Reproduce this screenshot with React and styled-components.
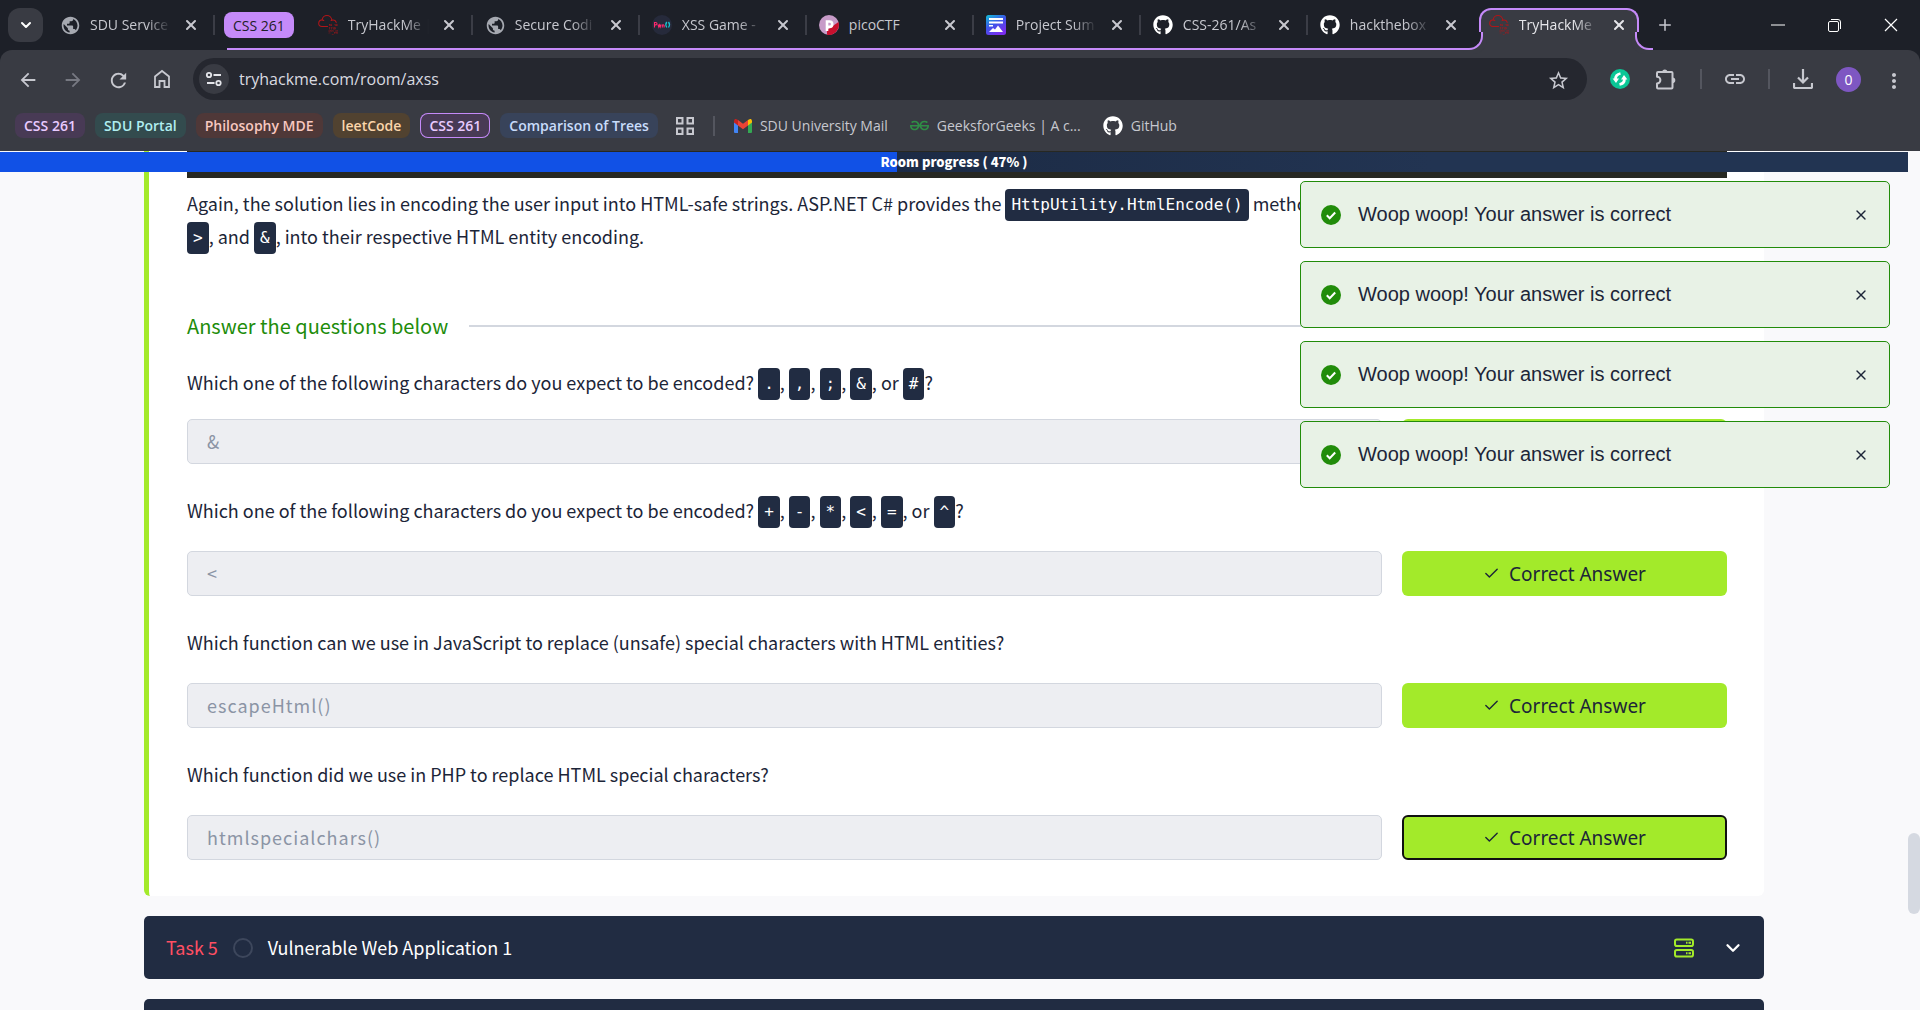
import React from "react";
import styled, { createGlobalStyle, css } from "styled-components";
import { FaGithub } from "react-icons/fa";
import { SiTryhackme, SiGeeksforgeeks } from "react-icons/si";
import { MdPublic, MdArrowBack, MdArrowForward, MdRefresh, MdStarBorder, MdLink, MdMoreVert } from "react-icons/md";
import { X, Plus, ChevronDown, Check } from "lucide-react";

const chromeFont = `"Open Sans", "Noto Sans", sans-serif`;
const pageFont = `"Noto Sans CJK SC", "Noto Sans", sans-serif`;
const strip = "#1d2028";
const bar = "#393b43";
const purple = "#c58af9";

const Global = createGlobalStyle`
  * { box-sizing: border-box; }
  body { margin: 0; background: #f9f9fb; }
  button, input { font: inherit; margin: 0; }
`;

const Window = styled.div`
  height: 100vh;
  display: flex;
  flex-direction: column;
  overflow: hidden;
  background: ${strip};
`;

/* ---------- tab strip ---------- */
const TabStrip = styled.header`
  height: 50px;
  display: flex;
  align-items: center;
  padding-left: 8px;
  color: #c7c8cf;
  font: 14px ${chromeFont};
`;
const PlainButton = styled.button`
  display: grid;
  place-items: center;
  flex: none;
  padding: 0;
  border: 0;
  background: none;
  color: inherit;
  width: ${(p) => p.$w || 20}px;
  height: ${(p) => p.$h || p.$w || 20}px;
`;
const TabSearch = styled(PlainButton)`
  margin-right: 5px;
  border-radius: 12px;
  background: ${bar};
  color: #fff;
`;
const Tab = styled.div`
  position: relative;
  flex: 0 1 167px;
  min-width: 0;
  height: 50px;
  display: flex;
  align-items: center;
  gap: 10px;
  padding: 0 14px 0 12px;
  &::after {
    content: "";
    position: absolute;
    right: 0;
    top: 15px;
    width: 2px;
    height: 20px;
    background: ${(p) => (p.$last ? "transparent" : "#3b3d46")};
  }
`;
const GroupTab = styled(Tab)`
  box-shadow: inset 0 -2px ${purple};
`;
const foot = css`
  content: "";
  position: absolute;
  bottom: 0;
  top: auto;
  width: 16px;
  height: 16px;
  background: ${strip};
  border-bottom: 2px solid ${purple};
`;
const ActiveTab = styled.div`
  position: relative;
  flex: 0 1 160px;
  min-width: 0;
  height: 42px;
  align-self: flex-end;
  margin: 0 4px;
  display: flex;
  align-items: center;
  gap: 10px;
  padding: 0 8px 10px 8px;
  color: #e6e6ea;
  background: ${bar};
  border: 2px solid ${purple};
  border-bottom: 0;
  border-radius: 12px 12px 0 0;
  &::before {
    ${foot}
    left: -16px;
    border-right: 2px solid ${purple};
    border-bottom-right-radius: 14px;
    box-shadow: 4px 4px 0 ${bar};
  }
  &::after {
    ${foot}
    right: -16px;
    border-left: 2px solid ${purple};
    border-bottom-left-radius: 14px;
    box-shadow: -4px 4px 0 ${bar};
  }
`;
const TabIcon = styled.span`
  flex: none;
  width: 20px;
  height: 20px;
  display: grid;
  place-items: center;
`;
const TabTitle = styled.span`
  flex: 1;
  min-width: 0;
  overflow: hidden;
  white-space: nowrap;
  line-height: 20px;
  mask-image: ${(p) => (p.$short ? "none" : "linear-gradient(90deg, #000 70%, transparent)")};
`;
const GroupStart = styled.div`
  flex: none;
  height: 50px;
  display: flex;
  align-items: center;
  padding: 0 12px 0 9px;
  background: linear-gradient(${purple}, ${purple}) 12px 100% / 100% 2px no-repeat;
`;
const GroupLabel = styled.button`
  height: 26px;
  padding: 0 9px;
  border: 0;
  border-radius: 8px;
  background: ${purple};
  color: ${strip};
  white-space: nowrap;
`;
const WindowControls = styled.div`
  margin-left: auto;
  display: flex;
  align-items: center;
  color: #fff;
`;

/* ---------- toolbar ---------- */
const Toolbar = styled.div`
  height: 58px;
  display: flex;
  align-items: center;
  gap: 21px;
  padding: 0 18px 0 17px;
  background: ${bar};
  border-radius: 12px 12px 0 0;
  color: #c7c8cf;
`;
const Nav = styled.nav`
  display: flex;
  gap: 25px;
`;
const AddressBar = styled.label`
  flex: 1;
  height: 42px;
  display: flex;
  align-items: center;
  gap: 10px;
  padding: 0 20px 0 6px;
  border-radius: 21px;
  background: #25272f;
  font: 16px ${chromeFont};
`;
const SiteInfo = styled(PlainButton)`
  border-radius: 50%;
  background: ${bar};
  color: #e4e5ea;
`;
const AddressText = styled.input`
  flex: 1;
  min-width: 0;
  border: 0;
  padding: 0;
  outline: 0;
  background: none;
  color: #d9dae0;
`;
const Tools = styled.div`
  display: flex;
  align-items: center;
  gap: 21px;
`;
const Divider = styled.span`
  flex: none;
  width: 2px;
  height: 20px;
  background: #54565f;
`;
const Avatar = styled(PlainButton)`
  border-radius: 50%;
  background: #7e57c2;
  color: #fff;
  font: 14px ${chromeFont};
`;

/* ---------- bookmarks ---------- */
const Bookmarks = styled.nav`
  height: 43px;
  display: flex;
  align-items: flex-start;
  gap: 10px;
  padding: 5px 15px 0;
  background: ${bar};
  color: #c7c8cf;
  font: 14px ${chromeFont};
`;
const Chip = styled.button`
  height: 25px;
  padding: 0 9px;
  border: 0;
  border-radius: 8px;
  box-shadow: ${(p) => (p.$outline ? `inset 0 0 0 1px ${purple}` : "none")};
  background: ${(p) => p.$bg};
  color: ${(p) => p.$fg};
  font-weight: 600;
  font-size: 14px;
  line-height: 20px;
  white-space: nowrap;
`;
const BookmarkTools = styled.div`
  height: 25px;
  display: flex;
  align-items: center;
  gap: 19px;
  padding: 0 9px 0 8px;
`;
const Bookmark = styled.a`
  height: 25px;
  display: flex;
  align-items: center;
  gap: 8px;
  margin-right: 12px;
  color: inherit;
  text-decoration: none;
  white-space: nowrap;
`;

/* ---------- page ---------- */
const Viewport = styled.div`
  position: relative;
  flex: 1;
  min-height: 0;
  display: flex;
  overflow: hidden;
  background: #f9f9fb;
  color: #1c2538;
  font: 18px/31px ${pageFont};
`;
const Room = styled.main`
  position: relative;
  flex: 1;
  min-width: 0;
  padding: 0 144px;
`;
const Progress = styled.div`
  position: absolute;
  left: 0;
  right: 0;
  top: 1px;
  height: 20px;
  display: grid;
  place-items: center;
  background: linear-gradient(90deg, #1151e6 47%, #1c2b45 47%, #223452 75%);
  color: #fff;
  font-size: 13px;
  line-height: 18px;
  font-weight: 900;
`;
const Scrollbar = styled.div`
  flex: none;
  width: 12px;
  padding-top: 682px;
`;
const Thumb = styled.div`
  height: 81px;
  border-radius: 6px;
  background: #d5d9e1;
`;
const Panel = styled.section`
  padding: 0 37px 36px 38px;
  border-left: 5px solid #a3ea2a;
  border-radius: 0 0 6px 6px;
  background: #fff;
`;
const CodeBlock = styled.div`
  height: 27px;
  background: #272822;
`;
const Paragraph = styled.p`
  margin: 10px 0 0;
`;
const Code = styled.code`
  display: inline-block;
  height: 32px;
  margin-top: 1px;
  padding: 0 6px;
  border-radius: 4px;
  background: #212c42;
  color: #fff;
  font: 16px/32px "DejaVu Sans Mono", "Liberation Mono", monospace;
  vertical-align: top;
`;
const SectionTitle = styled.h2`
  display: flex;
  align-items: center;
  gap: 21px;
  margin: 55px 0 25px;
  color: #218c0a;
  font-size: 20px;
  line-height: 33px;
  font-weight: 400;
  &::after {
    content: "";
    flex: 1;
    height: 2px;
    background: #d3d7df;
  }
`;
const Question = styled.div`
  display: flex;
  flex-direction: column;
  gap: ${(p) => (p.$tight ? 19 : 23)}px;
  & + & {
    margin-top: 31px;
  }
`;
const Prompt = styled.label`
  min-height: 33px;
`;
const AnswerRow = styled.div`
  display: grid;
  grid-template-columns: minmax(0, 1fr) 325px;
  gap: 20px;
`;
const Answer = styled.input`
  height: 45px;
  padding: 0 20px 2px 19px;
  border: 1px solid #d3d7df;
  border-radius: 5px;
  outline: 0;
  background: #edeef2;
  color: #8b94a5;
  letter-spacing: 1px;
`;
const CorrectButton = styled.button`
  height: 45px;
  display: flex;
  align-items: center;
  justify-content: center;
  gap: 9px;
  border: ${(p) => (p.$focused ? "2px solid #101010" : "0")};
  border-radius: 6px;
  background: #a3ea2a;
  color: #1c2538;
  font: 19px "Noto Sans", sans-serif;
`;
const TaskBar = styled.section`
  height: 63px;
  display: flex;
  align-items: center;
  margin-top: 20px;
  padding: 0 19px 0 22px;
  border-radius: 5px;
  background: #212c42;
  color: #fff;
`;
const TaskNumber = styled.span`
  color: #ff4f63;
`;
const TaskState = styled.span`
  width: 20px;
  height: 20px;
  margin: 0 15px;
  border: 2px solid #3d475c;
  border-radius: 50%;
`;
const TaskName = styled.h2`
  margin: 0;
  font-size: 18px;
  font-weight: 400;
`;
const TaskActions = styled.div`
  display: flex;
  align-items: center;
  gap: 27px;
  margin-left: auto;
`;

/* ---------- toasts ---------- */
const Toasts = styled.aside`
  position: absolute;
  right: 30px;
  top: 30px;
  width: 590px;
  display: flex;
  flex-direction: column;
  gap: 13px;
`;
const Toast = styled.div`
  height: 67px;
  display: flex;
  align-items: center;
  gap: 17px;
  padding: 0 18px 0 20px;
  border: 1px solid #218c0a;
  border-radius: 5px;
  background: #e8f2e6;
  font: 20px "Liberation Sans", Arial, sans-serif;
`;
const ToastText = styled.span`
  flex: 1;
`;

/* ---------- drawings ---------- */
const PwnIcon = () => (
  <svg width="20" height="20" viewBox="0 0 20 20">
    <circle cx="10" cy="10" r="10" fill="#262a3b" />
    <path d="M2.500 12.500V7.500h1.200q1.300 0 1.300 1.200t-1.300 1.200h-1.200M6 9.500l.8 2.500.7-2 .7 2 .7-2.500M10.300 12.500V10q1.800-.4 1.800.6v1.900" fill="none" stroke="#ff2a6d" strokeWidth="1.100" />
    <path d="M14.800 7q-2 2.500 0 5.500M16.500 7q2 2.500 0 5.500" fill="none" stroke="#19c3cf" strokeWidth="1.300" />
  </svg>
);
const PicoIcon = () => (
  <svg width="20" height="20" viewBox="0 0 20 20">
    <circle cx="10" cy="10" r="10" fill="#c79bc8" />
    <path d="M19.500 7A10 10 0 0 1 8 19.700V15z" fill="#c8102e" />
    <path d="M8 16V6.500h2.500a2.700 2.700 0 0 1 0 5.400H8" fill="none" stroke="#fff" strokeWidth="2.600" />
  </svg>
);
const ProjectIcon = () => (
  <svg width="20" height="20" viewBox="0 0 20 20">
    <defs>
      <linearGradient id="proj" x1="0" y1="0" x2=".6" y2="1">
        <stop offset="0" stopColor="#12c2d6" />
        <stop offset=".5" stopColor="#3b56e8" />
        <stop offset="1" stopColor="#7a2df0" />
      </linearGradient>
    </defs>
    <rect width="20" height="20" rx="2.500" fill="url(#proj)" />
    <path d="M3 4h14M3 7.500h14" stroke="#fff" strokeWidth="1.800" />
    <path d="M3 17l4-4 2 1.500 3-4 5 6.500zM3 10h4v1.500H3z" fill="#fff" />
  </svg>
);
const GmailIcon = () => (
  <svg width="18" height="14" viewBox="0 0 18 14">
    <path d="M0 2v11a1 1 0 0 0 1 1h3V5z" fill="#4285f4" />
    <path d="M18 2v11a1 1 0 0 1-1 1h-3V5z" fill="#34a853" />
    <path d="M4 1v5.500l5 3.800 5-3.800V1L9 4.800z" fill="#ea4335" />
    <path d="M0 2q.3-3 3-1.600L4 1v5.500L0 3.500z" fill="#c5221f" />
    <path d="M18 2q-.3-3-3-1.600L14 1v5.500l4-3z" fill="#fbbc04" />
  </svg>
);
const HomeIcon = () => (
  <svg width="20" height="20" viewBox="0 0 20 20" fill="none" stroke="currentColor" strokeWidth="1.800">
    <path d="M3 18V7.500L10 2l7 5.500V18h-4.500v-6h-5v6z" />
  </svg>
);
const TuneIcon = () => (
  <svg width="18" height="18" viewBox="0 0 18 18" fill="none" stroke="currentColor" strokeWidth="1.800">
    <circle cx="4" cy="5" r="2.200" />
    <path d="M8.500 5H16M2 13h7.500" />
    <circle cx="13.500" cy="13" r="2.200" />
  </svg>
);
const PuzzleIcon = () => (
  <svg width="22" height="22" viewBox="0 0 22 22" fill="none" stroke="currentColor" strokeWidth="2" strokeLinejoin="round">
    <path d="M3 4h13.500q1 0 1 1v14.500q0 1-1 1H3q-1 0-1-1V15.500a3.400 3.400 0 0 0 0-6.800V5q0-1 1-1z" />
    <path d="M7.200 4a2.600 2.600 0 0 1 5.200 0zM17.500 9.500a2.800 2.800 0 0 1 0 5.600z" fill="currentColor" stroke="none" />
  </svg>
);
const DownloadIcon = () => (
  <svg width="20" height="20" viewBox="0 0 20 20" fill="none" stroke="currentColor" strokeWidth="2.200">
    <path d="M10 0v13M5 8.500l5 5 5-5M1 14v4q0 1 1 1h16q1 0 1-1v-4" />
  </svg>
);
const SyncIcon = () => (
  <svg width="20" height="20" viewBox="0 0 20 20">
    <circle cx="10" cy="10" r="10" fill="#0bc796" />
    <path d="M10.500 4.500Q5.500 5.500 5.600 10M9.500 15.500Q14.500 14.500 14.400 10" fill="none" stroke="#fff" strokeWidth="2.800" />
    <path d="M2.600 9.500h6.400l-3 4.500zM17.400 10.500H11l3-4.500z" fill="#fff" />
  </svg>
);
const GridIcon = () => (
  <svg width="18" height="18" viewBox="0 0 18 18" fill="none" stroke="#c7c8cf" strokeWidth="2">
    <path d="M1 1h5.500v5.500H1zM11.500 1H17v5.500h-5.500zM1 11.500h5.500V17H1zM11.500 11.500H17V17h-5.500z" />
  </svg>
);
const RestoreIcon = () => (
  <svg width="13" height="13" viewBox="0 0 13 13" fill="none" stroke="currentColor">
    <rect x=".5" y="2.500" width="10" height="10" rx="1.500" />
    <path d="M3 .5h7a2.500 2.500 0 0 1 2.500 2.500v7" />
  </svg>
);
const ServerIcon = () => (
  <svg width="20" height="20" viewBox="0 0 20 20" fill="none" stroke="#a3ea2a" strokeWidth="2">
    <rect x="1" y="1.500" width="18" height="6.500" rx="1.800" />
    <rect x="1" y="12" width="18" height="6.500" rx="1.800" />
    <path d="M12 4.800h1.500M14.500 4.800h2.500M12 15.200h1.500M14.500 15.200h2.500" />
  </svg>
);
const SuccessIcon = () => (
  <svg width="20" height="20" viewBox="0 0 20 20">
    <circle cx="10" cy="10" r="10" fill="#218c0a" />
    <path d="M5.800 10.300l2.900 2.900 5.500-5.700" fill="none" stroke="#fff" strokeWidth="2" />
  </svg>
);

const Thm = () => <SiTryhackme size={20} color="#b01518" />;
const Globe = () => <MdPublic size={21} color="#a6a9b1" />;
const Github = () => <FaGithub size={20} color="#fff" />;

const groupTabs = [
  ["TryHackMe |", Thm],
  ["Secure Codi", Globe],
  ["XSS Game -", PwnIcon],
  ["picoCTF", PicoIcon, true],
  ["Project Sum", ProjectIcon],
  ["CSS-261/As", Github],
  ["hackthebox", Github],
];

const chips = [
  ["CSS 261", "#483a55", "#e9cbff"],
  ["SDU Portal", "#334b4e", "#b0eef0"],
  ["Philosophy MDE", "#4f3838", "#f8c8c0"],
  ["leetCode", "#514230", "#fbd6ab"],
  ["CSS 261", "#483a55", "#e9cbff", true],
  ["Comparison of Trees", "#38435a", "#c8dcfb"],
];

const questions = [
  { chars: [".", ",", ";", "&", "#"], answer: "&", tight: true },
  { chars: ["+", "-", "*", "<", "=", "^"], answer: "<" },
  { text: "Which function can we use in JavaScript to replace (unsafe) special characters with HTML entities?", answer: "escapeHtml()" },
  { text: "Which function did we use in PHP to replace HTML special characters?", answer: "htmlspecialchars()", focused: true },
];

const CloseTab = () => (
  <PlainButton aria-label="Close tab">
    <X size={16} strokeWidth={3} />
  </PlainButton>
);

const CharList = ({ chars }) => (
  <>
    Which one of the following characters do you expect to be encoded?{" "}
    {chars.map((c, i) => (
      <React.Fragment key={c}>
        {i === 0 ? "" : i === chars.length - 1 ? ", or " : ", "}
        <Code>{c}</Code>
      </React.Fragment>
    ))}
    ?
  </>
);

export default function App() {
  return (
    <Window>
      <Global />
      <TabStrip>
        <TabSearch $w={35} $h={34} aria-label="Search tabs">
          <ChevronDown size={16} strokeWidth={3} />
        </TabSearch>
        <Tab>
          <TabIcon><Globe /></TabIcon>
          <TabTitle>SDU Service</TabTitle>
          <CloseTab />
        </Tab>
        <GroupStart>
          <GroupLabel>CSS 261</GroupLabel>
        </GroupStart>
        {groupTabs.map(([title, Icon, short], i) => (
          <GroupTab key={title} $last={i === groupTabs.length - 1}>
            <TabIcon><Icon /></TabIcon>
            <TabTitle $short={short}>{title}</TabTitle>
            <CloseTab />
          </GroupTab>
        ))}
        <ActiveTab>
          <TabIcon><Thm /></TabIcon>
          <TabTitle>TryHackMe |</TabTitle>
          <CloseTab />
        </ActiveTab>
        <PlainButton $w={44} $h={36} aria-label="New tab"><Plus size={18} /></PlainButton>
        <WindowControls>
          <PlainButton $w={56} $h={40} aria-label="Minimize">
            <svg width="14" height="2"><path d="M0 1h14" stroke="currentColor" /></svg>
          </PlainButton>
          <PlainButton $w={56} $h={40} aria-label="Restore"><RestoreIcon /></PlainButton>
          <PlainButton $w={58} $h={40} aria-label="Close">
            <svg width="14" height="14"><path d="M1 1l12 12M13 1L1 13" stroke="currentColor" strokeWidth="1.200" /></svg>
          </PlainButton>
        </WindowControls>
      </TabStrip>

      <Toolbar>
        <Nav>
          <PlainButton aria-label="Back"><MdArrowBack size={22} /></PlainButton>
          <PlainButton aria-label="Forward"><MdArrowForward size={22} color="#777982" /></PlainButton>
          <PlainButton aria-label="Reload"><MdRefresh size={23} /></PlainButton>
          <PlainButton aria-label="Home"><HomeIcon /></PlainButton>
        </Nav>
        <AddressBar>
          <SiteInfo $w={30} aria-label="Site information"><TuneIcon /></SiteInfo>
          <AddressText readOnly value="tryhackme.com/room/axss" aria-label="Address" />
          <PlainButton aria-label="Bookmark"><MdStarBorder size={23} /></PlainButton>
        </AddressBar>
        <Tools>
          <PlainButton $w={24} aria-label="Sync"><SyncIcon /></PlainButton>
          <PlainButton $w={26} aria-label="Extensions"><PuzzleIcon /></PlainButton>
          <Divider />
          <PlainButton $w={24} aria-label="Copy link"><MdLink size={24} /></PlainButton>
          <Divider />
          <PlainButton $w={24} aria-label="Downloads"><DownloadIcon /></PlainButton>
          <Avatar $w={25} aria-label="Profile">0</Avatar>
          <PlainButton $w={20} aria-label="Menu"><MdMoreVert size={24} /></PlainButton>
        </Tools>
      </Toolbar>

      <Bookmarks>
        {chips.map(([label, bg, fg, outline], i) => (
          <Chip key={i} $bg={bg} $fg={fg} $outline={outline}>{label}</Chip>
        ))}
        <BookmarkTools>
          <GridIcon />
          <Divider />
        </BookmarkTools>
        <Bookmark href="#mail"><GmailIcon />SDU University Mail</Bookmark>
        <Bookmark href="#gfg"><SiGeeksforgeeks size={19} color="#2f8d46" />GeeksforGeeks | A c...</Bookmark>
        <Bookmark href="#github"><Github />GitHub</Bookmark>
      </Bookmarks>

      <Viewport>
        <Room>
          <Panel>
            <CodeBlock />
            <Paragraph>
              Again, the solution lies in encoding the user input into HTML-safe strings. ASP.NET C# provides the{" "}
              <Code>HttpUtility.HtmlEncode()</Code> method
              <br />
              <Code>&gt;</Code>, and <Code>&amp;</Code>, into their respective HTML entity encoding.
            </Paragraph>
            <SectionTitle>Answer the questions below</SectionTitle>
            {questions.map((q, i) => (
              <Question key={q.answer} $tight={q.tight}>
                <Prompt htmlFor={`answer-${i}`}>{q.chars ? <CharList chars={q.chars} /> : q.text}</Prompt>
                <AnswerRow>
                  <Answer id={`answer-${i}`} readOnly value={q.answer} />
                  <CorrectButton $focused={q.focused}>
                    <Check size={17} />
                    Correct Answer
                  </CorrectButton>
                </AnswerRow>
              </Question>
            ))}
          </Panel>
          <TaskBar>
            <TaskNumber>Task 5</TaskNumber>
            <TaskState />
            <TaskName>Vulnerable Web Application 1</TaskName>
            <TaskActions>
              <ServerIcon />
              <PlainButton $w={24} aria-label="Expand task"><ChevronDown size={22} strokeWidth={2.5} /></PlainButton>
            </TaskActions>
          </TaskBar>
          <TaskBar />
          <Progress>Room progress ( 47% )</Progress>
        </Room>
        <Scrollbar><Thumb /></Scrollbar>
        <Toasts>
          {[0, 1, 2, 3].map((n) => (
            <Toast key={n} role="status">
              <SuccessIcon />
              <ToastText>Woop woop! Your answer is correct</ToastText>
              <PlainButton aria-label="Dismiss"><X size={16} strokeWidth={2} /></PlainButton>
            </Toast>
          ))}
        </Toasts>
      </Viewport>
    </Window>
  );
}
